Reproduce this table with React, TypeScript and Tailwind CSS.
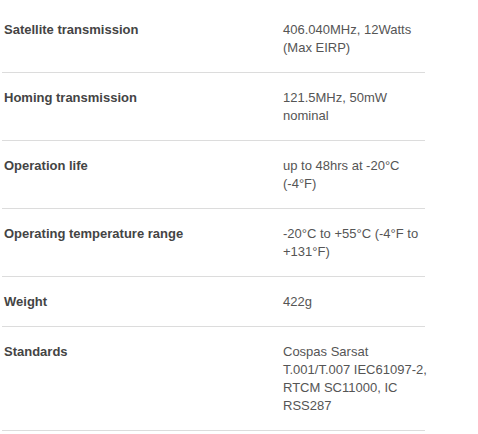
const specs = [
  { label: "Satellite transmission", value: "406.040MHz, 12Watts (Max EIRP)" },
  { label: "Homing transmission", value: "121.5MHz, 50mW nominal" },
  { label: "Operation life", value: "up to 48hrs at -20°C (-4°F)" },
  { label: "Operating temperature range", value: "-20°C to +55°C (-4°F to +131°F)" },
  { label: "Weight", value: "422g" },
  {
    label: "Standards",
    value: "Cospas Sarsat T.001/T.007 IEC61097-2, RTCM SC11000, IC RSS287",
  },
];

export default function App() {
  return (
    <div className="min-h-[434px] w-[478px] bg-white pt-[5px] font-['Liberation_Sans',Arial,sans-serif] text-[13px] leading-[18px]">
      <div className="ml-[2px] w-[423px]">
        {specs.map((row) => (
          <div
            key={row.label}
            className="grid grid-cols-[281px_147px] border-b border-[#dcdcdc] pt-[16px] pb-[15px]"
          >
            <div className="pl-[2px] font-bold text-[#444]">{row.label}</div>
            <div className="text-[#555]">{row.value}</div>
          </div>
        ))}
      </div>
    </div>
  );
}
